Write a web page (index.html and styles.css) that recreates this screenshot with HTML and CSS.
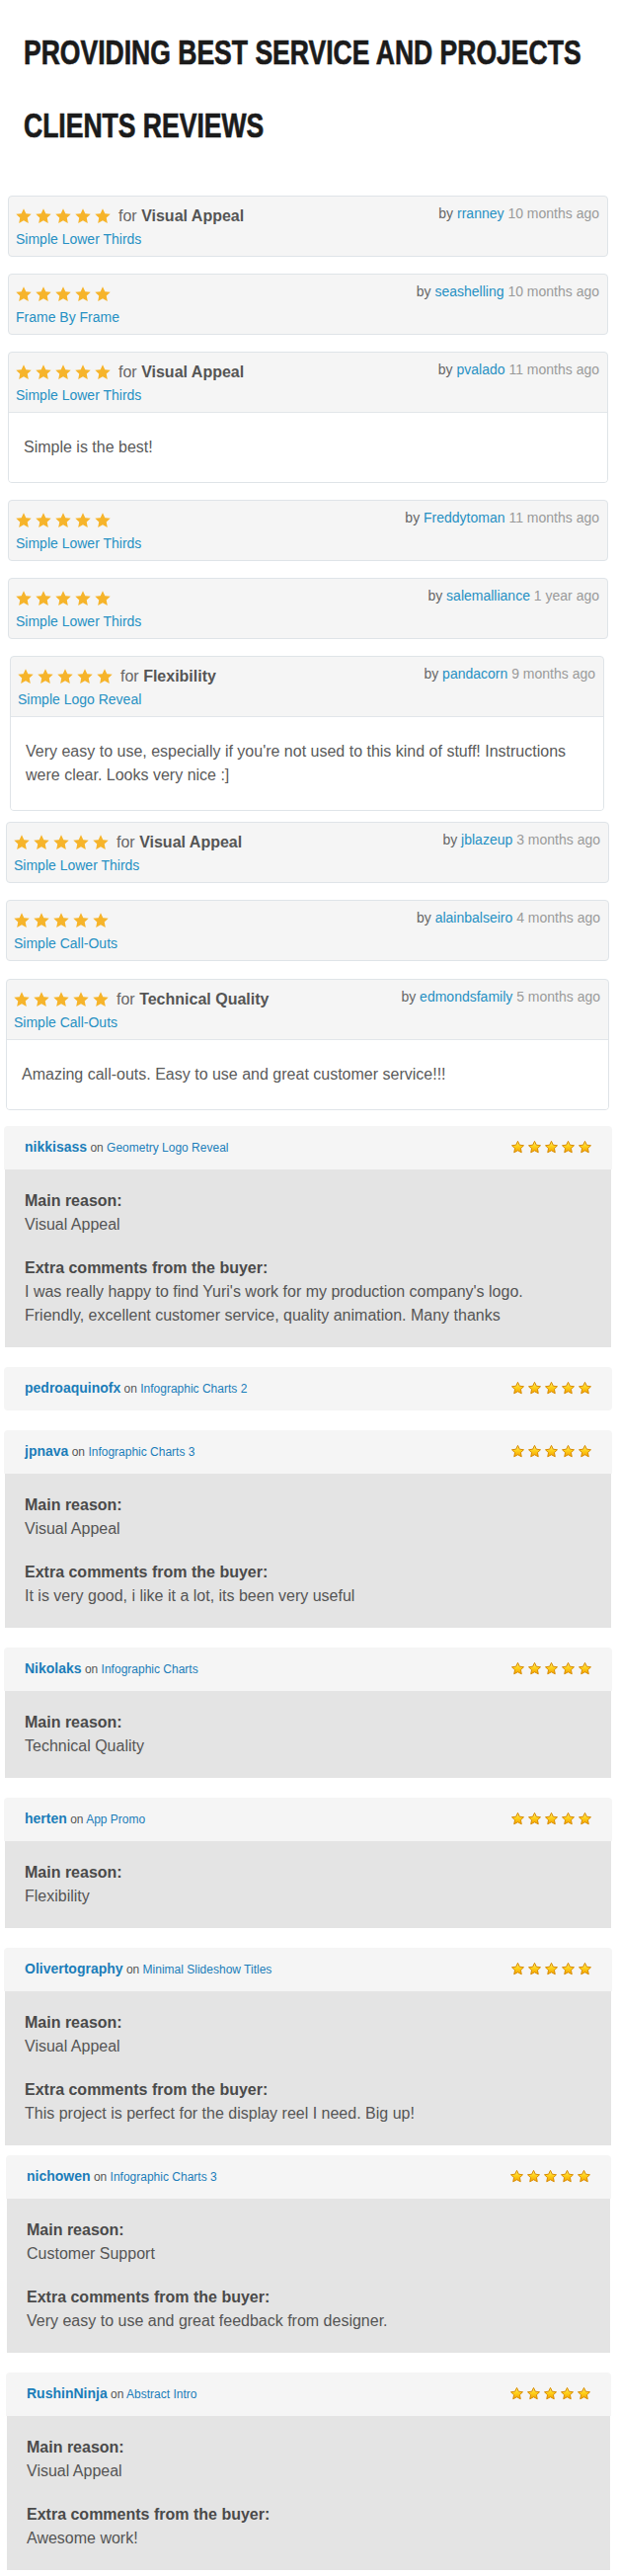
FILE: index.html
```html
<!DOCTYPE html>
<html lang="en">
<head>
<meta charset="utf-8">
<title>Clients Reviews</title>
<link rel="stylesheet" href="styles.css">
</head>
<body>
<svg class="defs" width="0" height="0" aria-hidden="true">
  <defs>
    <linearGradient id="gloss" x1="0" y1="0" x2="0" y2="1">
      <stop offset="0" stop-color="#fff27a"/>
      <stop offset="0.45" stop-color="#ffd21c"/>
      <stop offset="1" stop-color="#f4a200"/>
    </linearGradient>
    <symbol id="star" viewBox="0 0 24 24">
      <path d="M12 1.6l3.1 6.6 7.2.9-5.3 5 1.4 7.1L12 17.7l-6.4 3.5L7 14.1 1.7 9.1l7.2-.9z"/>
    </symbol>
    <symbol id="gstar" viewBox="0 0 24 24">
      <path d="M12 2.2l2.9 6.1 6.7.9-4.9 4.6 1.3 6.6L12 17.2l-6 3.2 1.3-6.6-4.9-4.6 6.7-.9z" fill="url(#gloss)" stroke="#d98b00" stroke-width="1.6" stroke-linejoin="round"/>
    </symbol>
  </defs>
</svg>

<div class="page">
  <h1 class="title title-main"><span>PROVIDING BEST SERVICE AND PROJECTS</span></h1>
  <h2 class="title title-sub"><span>CLIENTS REVIEWS</span></h2>

  <div class="review">
    <div class="review-head">
      <div class="head-left">
        <div class="rating-line"><span class="stars"><svg class="star"><use href="#star"/></svg><svg class="star"><use href="#star"/></svg><svg class="star"><use href="#star"/></svg><svg class="star"><use href="#star"/></svg><svg class="star"><use href="#star"/></svg></span><span class="for">for <b>Visual Appeal</b></span></div>
        <a class="item" href="#">Simple Lower Thirds</a>
      </div>
      <div class="byline">by <a href="#">rranney</a> <span class="ago">10 months ago</span></div>
    </div>
  </div>

  <div class="review">
    <div class="review-head">
      <div class="head-left">
        <div class="rating-line"><span class="stars"><svg class="star"><use href="#star"/></svg><svg class="star"><use href="#star"/></svg><svg class="star"><use href="#star"/></svg><svg class="star"><use href="#star"/></svg><svg class="star"><use href="#star"/></svg></span></div>
        <a class="item" href="#">Frame By Frame</a>
      </div>
      <div class="byline">by <a href="#">seashelling</a> <span class="ago">10 months ago</span></div>
    </div>
  </div>

  <div class="review">
    <div class="review-head">
      <div class="head-left">
        <div class="rating-line"><span class="stars"><svg class="star"><use href="#star"/></svg><svg class="star"><use href="#star"/></svg><svg class="star"><use href="#star"/></svg><svg class="star"><use href="#star"/></svg><svg class="star"><use href="#star"/></svg></span><span class="for">for <b>Visual Appeal</b></span></div>
        <a class="item" href="#">Simple Lower Thirds</a>
      </div>
      <div class="byline">by <a href="#">pvalado</a> <span class="ago">11 months ago</span></div>
    </div>
    <div class="review-body">Simple is the best!</div>
  </div>

  <div class="review">
    <div class="review-head">
      <div class="head-left">
        <div class="rating-line"><span class="stars"><svg class="star"><use href="#star"/></svg><svg class="star"><use href="#star"/></svg><svg class="star"><use href="#star"/></svg><svg class="star"><use href="#star"/></svg><svg class="star"><use href="#star"/></svg></span></div>
        <a class="item" href="#">Simple Lower Thirds</a>
      </div>
      <div class="byline">by <a href="#">Freddytoman</a> <span class="ago">11 months ago</span></div>
    </div>
  </div>

  <div class="review">
    <div class="review-head">
      <div class="head-left">
        <div class="rating-line"><span class="stars"><svg class="star"><use href="#star"/></svg><svg class="star"><use href="#star"/></svg><svg class="star"><use href="#star"/></svg><svg class="star"><use href="#star"/></svg><svg class="star"><use href="#star"/></svg></span></div>
        <a class="item" href="#">Simple Lower Thirds</a>
      </div>
      <div class="byline">by <a href="#">salemalliance</a> <span class="ago">1 year ago</span></div>
    </div>
  </div>

  <div class="review review-narrow">
    <div class="review-head">
      <div class="head-left">
        <div class="rating-line"><span class="stars"><svg class="star"><use href="#star"/></svg><svg class="star"><use href="#star"/></svg><svg class="star"><use href="#star"/></svg><svg class="star"><use href="#star"/></svg><svg class="star"><use href="#star"/></svg></span><span class="for">for <b>Flexibility</b></span></div>
        <a class="item" href="#">Simple Logo Reveal</a>
      </div>
      <div class="byline">by <a href="#">pandacorn</a> <span class="ago">9 months ago</span></div>
    </div>
    <div class="review-body">Very easy to use, especially if you're not used to this kind of stuff! Instructions were clear. Looks very nice :]</div>
  </div>

  <div class="review review-wide">
    <div class="review-head">
      <div class="head-left">
        <div class="rating-line"><span class="stars"><svg class="star"><use href="#star"/></svg><svg class="star"><use href="#star"/></svg><svg class="star"><use href="#star"/></svg><svg class="star"><use href="#star"/></svg><svg class="star"><use href="#star"/></svg></span><span class="for">for <b>Visual Appeal</b></span></div>
        <a class="item" href="#">Simple Lower Thirds</a>
      </div>
      <div class="byline">by <a href="#">jblazeup</a> <span class="ago">3 months ago</span></div>
    </div>
  </div>

  <div class="review review-wide">
    <div class="review-head">
      <div class="head-left">
        <div class="rating-line"><span class="stars"><svg class="star"><use href="#star"/></svg><svg class="star"><use href="#star"/></svg><svg class="star"><use href="#star"/></svg><svg class="star"><use href="#star"/></svg><svg class="star"><use href="#star"/></svg></span></div>
        <a class="item" href="#">Simple Call-Outs</a>
      </div>
      <div class="byline">by <a href="#">alainbalseiro</a> <span class="ago">4 months ago</span></div>
    </div>
  </div>

  <div class="review review-wide review-last">
    <div class="review-head">
      <div class="head-left">
        <div class="rating-line"><span class="stars"><svg class="star"><use href="#star"/></svg><svg class="star"><use href="#star"/></svg><svg class="star"><use href="#star"/></svg><svg class="star"><use href="#star"/></svg><svg class="star"><use href="#star"/></svg></span><span class="for">for <b>Technical Quality</b></span></div>
        <a class="item" href="#">Simple Call-Outs</a>
      </div>
      <div class="byline">by <a href="#">edmondsfamily</a> <span class="ago">5 months ago</span></div>
    </div>
    <div class="review-body">Amazing call-outs. Easy to use and great customer service!!!</div>
  </div>

  <div class="feedback">
    <div class="fb-head">
      <div class="fb-user"><a class="name" href="#">nikkisass</a> on <a class="product" href="#">Geometry Logo Reveal</a></div>
      <div class="fb-stars"><svg><use href="#gstar"/></svg><svg><use href="#gstar"/></svg><svg><use href="#gstar"/></svg><svg><use href="#gstar"/></svg><svg><use href="#gstar"/></svg></div>
    </div>
    <div class="fb-body">
      <p><strong>Main reason:</strong><br>Visual Appeal</p>
      <p><strong>Extra comments from the buyer:</strong><br>I was really happy to find Yuri's work for my production company's logo. Friendly, excellent customer service, quality animation. Many thanks</p>
    </div>
  </div>

  <div class="feedback no-body">
    <div class="fb-head">
      <div class="fb-user"><a class="name" href="#">pedroaquinofx</a> on <a class="product" href="#">Infographic Charts 2</a></div>
      <div class="fb-stars"><svg><use href="#gstar"/></svg><svg><use href="#gstar"/></svg><svg><use href="#gstar"/></svg><svg><use href="#gstar"/></svg><svg><use href="#gstar"/></svg></div>
    </div>
  </div>

  <div class="feedback">
    <div class="fb-head">
      <div class="fb-user"><a class="name" href="#">jpnava</a> on <a class="product" href="#">Infographic Charts 3</a></div>
      <div class="fb-stars"><svg><use href="#gstar"/></svg><svg><use href="#gstar"/></svg><svg><use href="#gstar"/></svg><svg><use href="#gstar"/></svg><svg><use href="#gstar"/></svg></div>
    </div>
    <div class="fb-body">
      <p><strong>Main reason:</strong><br>Visual Appeal</p>
      <p><strong>Extra comments from the buyer:</strong><br>It is very good, i like it a lot, its been very useful</p>
    </div>
  </div>

  <div class="feedback">
    <div class="fb-head">
      <div class="fb-user"><a class="name" href="#">Nikolaks</a> on <a class="product" href="#">Infographic Charts</a></div>
      <div class="fb-stars"><svg><use href="#gstar"/></svg><svg><use href="#gstar"/></svg><svg><use href="#gstar"/></svg><svg><use href="#gstar"/></svg><svg><use href="#gstar"/></svg></div>
    </div>
    <div class="fb-body">
      <p><strong>Main reason:</strong><br>Technical Quality</p>
    </div>
  </div>

  <div class="feedback">
    <div class="fb-head">
      <div class="fb-user"><a class="name" href="#">herten</a> on <a class="product" href="#">App Promo</a></div>
      <div class="fb-stars"><svg><use href="#gstar"/></svg><svg><use href="#gstar"/></svg><svg><use href="#gstar"/></svg><svg><use href="#gstar"/></svg><svg><use href="#gstar"/></svg></div>
    </div>
    <div class="fb-body">
      <p><strong>Main reason:</strong><br>Flexibility</p>
    </div>
  </div>

  <div class="feedback feedback-tight">
    <div class="fb-head">
      <div class="fb-user"><a class="name" href="#">Olivertography</a> on <a class="product" href="#">Minimal Slideshow Titles</a></div>
      <div class="fb-stars"><svg><use href="#gstar"/></svg><svg><use href="#gstar"/></svg><svg><use href="#gstar"/></svg><svg><use href="#gstar"/></svg><svg><use href="#gstar"/></svg></div>
    </div>
    <div class="fb-body">
      <p><strong>Main reason:</strong><br>Visual Appeal</p>
      <p><strong>Extra comments from the buyer:</strong><br>This project is perfect for the display reel I need. Big up!</p>
    </div>
  </div>

  <div class="feedback feedback-shift">
    <div class="fb-head">
      <div class="fb-user"><a class="name" href="#">nichowen</a> on <a class="product" href="#">Infographic Charts 3</a></div>
      <div class="fb-stars"><svg><use href="#gstar"/></svg><svg><use href="#gstar"/></svg><svg><use href="#gstar"/></svg><svg><use href="#gstar"/></svg><svg><use href="#gstar"/></svg></div>
    </div>
    <div class="fb-body">
      <p><strong>Main reason:</strong><br>Customer Support</p>
      <p><strong>Extra comments from the buyer:</strong><br>Very easy to use and great feedback from designer.</p>
    </div>
  </div>

  <div class="feedback feedback-shift feedback-last">
    <div class="fb-head">
      <div class="fb-user"><a class="name" href="#">RushinNinja</a> on <a class="product" href="#">Abstract Intro</a></div>
      <div class="fb-stars"><svg><use href="#gstar"/></svg><svg><use href="#gstar"/></svg><svg><use href="#gstar"/></svg><svg><use href="#gstar"/></svg><svg><use href="#gstar"/></svg></div>
    </div>
    <div class="fb-body">
      <p><strong>Main reason:</strong><br>Visual Appeal</p>
      <p><strong>Extra comments from the buyer:</strong><br>Awesome work!</p>
    </div>
  </div>
</div>
</body>
</html>
```

FILE: styles.css
```css
* { box-sizing: border-box; }

html, body {
  margin: 0;
  padding: 0;
  background: #ffffff;
}

body {
  font-family: "Liberation Sans", Arial, Helvetica, sans-serif;
  color: #555555;
}

.defs {
  display: block;
  width: 0;
  height: 0;
  overflow: hidden;
}

a { text-decoration: none; }

.page {
  width: 627px;
  padding-top: 33px;
  overflow: hidden;
}

/* Headings */
.title {
  margin: 0;
  padding-left: 24px;
  font-size: 35px;
  line-height: 40px;
  font-weight: 700;
  color: #1b1b1b;
  white-space: nowrap;
  overflow: hidden;
}
.title span {
  display: inline-block;
  transform: scaleX(0.758);
  transform-origin: 0 50%;
  -webkit-text-stroke: 0.7px #1b1b1b;
}
.title-sub {
  margin-top: 34px;
  margin-bottom: 51px;
}

/* Light review cards */
.review {
  width: 608px;
  margin: 0 0 17px 8px;
  background: #f5f5f5;
  border: 1px solid #dfe4e8;
  border-radius: 4px;
  overflow: hidden;
}
.review-narrow {
  width: 602px;
  margin-left: 10px;
  margin-bottom: 11px;
}
.review-wide {
  width: 611px;
  margin-left: 6px;
}
.review-last { margin-top: 18px; margin-bottom: 16px; }

.review-head {
  display: flex;
  justify-content: space-between;
  align-items: flex-start;
  padding: 7px 8px 7px 7px;
}
.rating-line {
  display: flex;
  align-items: center;
  height: 20px;
  margin-top: 3px;
  font-size: 16px;
  line-height: 20px;
}
.stars {
  display: flex;
  gap: 2px;
  margin-right: 7px;
  margin-left: -1px;
}
.star {
  width: 18px;
  height: 18px;
  fill: #f6b42b;
}
.for { color: #666666; }
.for b { color: #555555; font-weight: 700; }

.item {
  display: block;
  margin-top: 3px;
  font-size: 14px;
  line-height: 20px;
  color: #2690c3;
}
.byline {
  font-size: 14px;
  line-height: 20px;
  color: #666666;
  white-space: nowrap;
}
.byline a { color: #2690c3; }
.byline .ago { color: #9a9a9a; }

.review-body {
  background: #ffffff;
  border-top: 1px solid #e2e6ea;
  padding: 23px 15px;
  font-size: 16px;
  line-height: 24px;
  color: #5a5a5a;
}

/* Buyer feedback cards */
.feedback {
  width: 616px;
  margin: 0 0 20px 4px;
}
.feedback-tight { margin-bottom: 10px; }
.feedback-shift { width: 613px; margin-left: 6px; }
.feedback-last { margin-bottom: 0; }

.fb-head {
  display: flex;
  justify-content: space-between;
  align-items: center;
  height: 44px;
  padding: 0 20px 2px 21px;
  background: #f5f5f5;
  border-radius: 4px 4px 0 0;
}
.no-body .fb-head { border-radius: 4px; }

.fb-user {
  font-size: 12px;
  line-height: 20px;
  color: #555555;
  white-space: nowrap;
}
.fb-user .name {
  font-size: 14px;
  font-weight: 700;
  color: #1b7db9;
}
.fb-user .product { color: #1b7db9; }

.fb-stars {
  display: flex;
  gap: 2px;
}
.fb-stars svg {
  width: 15px;
  height: 15px;
}

.fb-body {
  margin: 0 1px;
  padding: 20px 30px 20px 20px;
  background: #e4e4e4;
  font-size: 16px;
  line-height: 24px;
  color: #555555;
}
.fb-body p { margin: 0 0 20px; }
.fb-body p:last-child { margin-bottom: 0; }
.fb-body strong { color: #4a4a4a; font-weight: 700; }
```
